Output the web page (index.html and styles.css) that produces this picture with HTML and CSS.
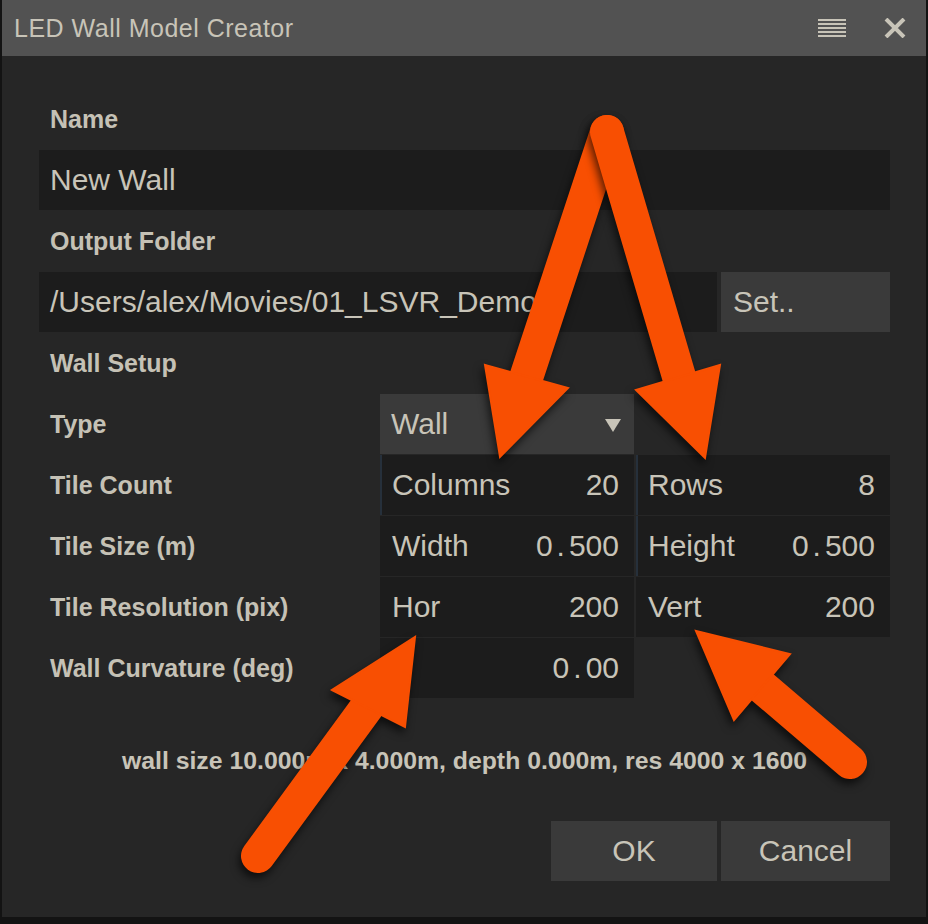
FILE: index.html
```html
<!DOCTYPE html>
<html>
<head>
<meta charset="utf-8">
<link rel="stylesheet" href="styles.css">
</head>
<body>
<div class="window">
  <div class="titlebar">
    <span class="title">LED Wall Model Creator</span>
    <div class="title-icons">
      <svg class="icon-menu" width="28" height="18" viewBox="0 0 28 18">
        <rect x="0" y="0" width="28" height="2"/>
        <rect x="0" y="4" width="28" height="2"/>
        <rect x="0" y="8" width="28" height="2"/>
        <rect x="0" y="12" width="28" height="2"/>
        <rect x="0" y="16" width="28" height="2"/>
      </svg>
      <svg class="icon-close" width="22" height="20" viewBox="0 0 22 20">
        <path d="M2 1 L20 19 M20 1 L2 19"/>
      </svg>
    </div>
  </div>
  <div class="content">
    <div class="form">
      <div class="row"><div class="label">Name</div></div>
      <div class="row"><div class="field grow">New Wall</div></div>
      <div class="row"><div class="label">Output Folder</div></div>
      <div class="row folder"><div class="field grow">/Users/alex/Movies/01_LSVR_Demo</div><div class="btn set">Set..</div></div>
      <div class="row"><div class="label">Wall Setup</div></div>
      <div class="row grid">
        <div class="label side">Type</div>
        <div class="dropdown"><span>Wall</span><span class="caret"></span></div>
      </div>
      <div class="row grid">
        <div class="label side">Tile Count</div>
        <div class="cell accent"><span>Columns</span><span>20</span></div>
        <div class="cell accent"><span>Rows</span><span>8</span></div>
      </div>
      <div class="row grid">
        <div class="label side">Tile Size (m)</div>
        <div class="cell"><span>Width</span><span>0<span class="dot">.</span>500</span></div>
        <div class="cell accent"><span>Height</span><span>0<span class="dot">.</span>500</span></div>
      </div>
      <div class="row grid">
        <div class="label side">Tile Resolution (pix)</div>
        <div class="cell"><span>Hor</span><span>200</span></div>
        <div class="cell"><span>Vert</span><span>200</span></div>
      </div>
      <div class="row grid">
        <div class="label side">Wall Curvature (deg)</div>
        <div class="cell"><span></span><span>0<span class="dot">.</span>00</span></div>
      </div>
    </div>
    <div class="status">wall size 10.000m x 4.000m, depth 0.000m, res 4000 x 1600</div>
    <div class="actions">
      <div class="btn ok">OK</div>
      <div class="btn cancel">Cancel</div>
    </div>
  </div>
</div>
<svg class="arrows" width="928" height="924" viewBox="0 0 928 924">
  <g class="arrow">
    <line x1="607" y1="132" x2="526" y2="378"/>
    <polygon points="485,365 568,388 500,457"/>
  </g>
  <g class="arrow">
    <line x1="607" y1="132" x2="680" y2="380"/>
    <polygon points="636,390 720,365 705,458"/>
  </g>
  <g class="arrow">
    <line x1="258" y1="856" x2="367" y2="707"/>
    <polygon points="332,690 405,727 415,637"/>
  </g>
  <g class="arrow">
    <line x1="850" y1="762" x2="761" y2="686"/>
    <polygon points="734,720 790,654 696,631"/>
  </g>
</svg>
</body>
</html>
```

FILE: styles.css
```css
html, body {
  margin: 0;
  padding: 0;
}
body {
  background: #131313;
  width: 928px;
  height: 924px;
  overflow: hidden;
  position: relative;
  font-family: "Liberation Sans", Arial, sans-serif;
  color: #c8c4b8;
}
.window {
  margin-left: 2px;
  width: 924px;
  height: 917px;
  background: #262626;
  display: flex;
  flex-direction: column;
}
.titlebar {
  height: 56px;
  background: #525252;
  display: flex;
  align-items: center;
  justify-content: space-between;
  padding: 0 20px 0 12px;
  flex-shrink: 0;
}
.title {
  font-size: 25px;
  letter-spacing: 0.5px;
  color: #c8c4b8;
  padding-top: 1px;
}
.title-icons {
  display: flex;
  align-items: center;
  gap: 38px;
}
.icon-menu rect {
  fill: #c8c4b8;
}
.icon-close path {
  stroke: #c8c4b8;
  stroke-width: 4;
  fill: none;
}
.content {
  flex: 1;
  padding: 33px 36px 36px 37px;
  display: flex;
  flex-direction: column;
}
.form {
  display: flex;
  flex-direction: column;
  gap: 1px;
}
.row {
  height: 60px;
  display: flex;
  align-items: stretch;
}
.row.folder {
  gap: 4px;
}
.row.grid {
  gap: 2px;
}
.label {
  display: flex;
  align-items: center;
  padding-left: 11px;
  font-weight: bold;
  font-size: 25px;
  color: #c5c1b5;
}
.label.side {
  width: 328px;
  flex-shrink: 0;
}
.field {
  background: #1c1c1c;
  display: flex;
  align-items: center;
  padding-left: 11px;
  font-size: 30px;
  color: #c8c4b8;
}
.grow {
  flex: 1;
}
.btn {
  background: #3a3a3a;
  display: flex;
  align-items: center;
  font-size: 30px;
  color: #c8c4b8;
}
.btn.set {
  width: 157px;
  padding-left: 12px;
}
.dropdown {
  width: 254px;
  flex-shrink: 0;
  box-sizing: border-box;
  background: #3a3a3a;
  display: flex;
  align-items: center;
  justify-content: space-between;
  padding: 0 13px 0 11px;
  font-size: 30px;
}
.caret {
  width: 0;
  height: 0;
  border-left: 8px solid transparent;
  border-right: 8px solid transparent;
  border-top: 13px solid #c8c4b8;
  margin-top: 2px;
}
.cell {
  width: 254px;
  flex-shrink: 0;
  box-sizing: border-box;
  background: #1c1c1c;
  display: flex;
  align-items: center;
  justify-content: space-between;
  padding: 0 15px 0 10px;
  font-size: 30px;
  border-left: 2px solid #1c1c1c;
}
.cell.accent {
  border-left-color: #26303b;
}
.dot {
  margin: 0 4px;
}
.status {
  margin-top: 48px;
  text-align: center;
  font-weight: bold;
  font-size: 24.8px;
  line-height: 30px;
  color: #c8c4b8;
}
.actions {
  margin-top: auto;
  display: flex;
  justify-content: flex-end;
  gap: 4px;
}
.actions .btn {
  height: 60px;
  justify-content: center;
}
.btn.ok {
  width: 166px;
}
.btn.cancel {
  width: 169px;
}
.arrows {
  position: absolute;
  left: 0;
  top: 0;
  pointer-events: none;
}
.arrow {
  filter: drop-shadow(-2px 5px 4px rgba(0, 0, 0, 0.65));
}
.arrow line {
  stroke: #f84f02;
  stroke-width: 34;
  stroke-linecap: round;
}
.arrow polygon {
  fill: #f84f02;
  stroke: #f84f02;
  stroke-width: 2;
  stroke-linejoin: miter;
}
```
